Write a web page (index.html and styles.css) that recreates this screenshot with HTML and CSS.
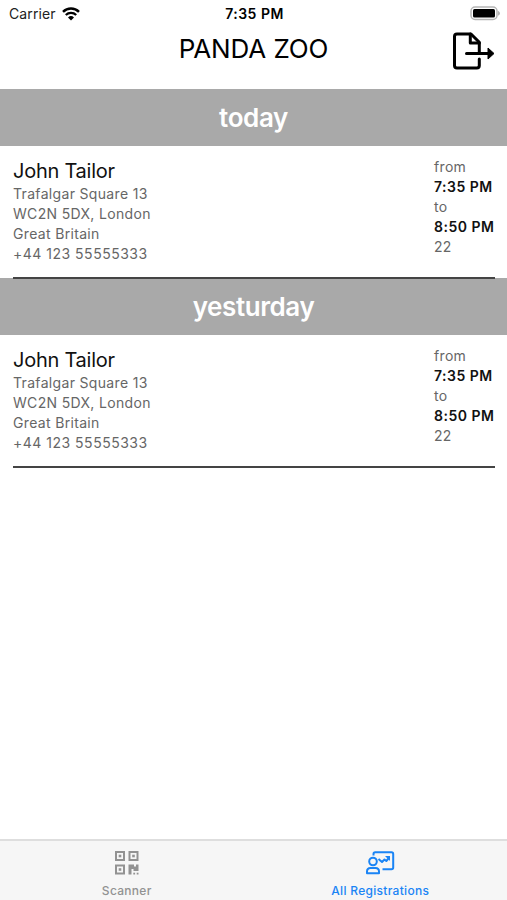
FILE: index.html
```
<!DOCTYPE html>
<html lang="en">
<head>
    <meta charset="UTF-8">
    <meta name="viewport" content="width=device-width, initial-scale=1.0">
    <title>Panda Zoo</title>
    <link rel="stylesheet" href="styles.css">
</head>
<body>
    <div class="app">
        <div class="status-bar">
            <div class="carrier">
                <span>Carrier</span>
                <svg class="wifi" width="18" height="14" viewBox="0 0 18 14">
                    <path d="M1 4.800a11.500 11.500 0 0 1 16 0" fill="none" stroke="#000" stroke-width="2.500"/>
                    <path d="M3.800 8a7.500 7.500 0 0 1 10.400 0" fill="none" stroke="#000" stroke-width="2.300"/>
                    <path d="M6 10.500a4.300 4.300 0 0 1 6 0L9 13.600z"/>
                </svg>
            </div>
            <div class="clock">7:35 PM</div>
            <svg class="battery" width="31" height="15" viewBox="0 0 31 15">
                <rect x="2" y="1" width="26" height="12.500" rx="4" fill="#fff" stroke="#b5b5b5" stroke-width="1.500"/>
                <rect x="4" y="3" width="22" height="8.500" rx="1.500"/>
                <path d="M29 4.800v5q2-1 2-2.500t-2-2.500z" fill="#b5b5b5"/>
            </svg>
        </div>

        <div class="header">
            <h1 class="title">PANDA ZOO</h1>
            <svg class="export" width="43" height="38" viewBox="0 0 43 38">
                <g fill="none" stroke="#000" stroke-width="3" stroke-linejoin="round" stroke-linecap="round">
                    <path d="M27.300 27V33.500q0 2.500-2.500 2.500H5q-2.500 0-2.500-2.500V4.500Q2.500 2 5 2H19l8.300 8.300V20"/>
                    <path d="M18.300 2v9h9"/>
                    <path d="M14.500 21.500H36"/>
                </g>
                <path d="M36 16v11l6-5.500z" stroke="#000" stroke-linejoin="round"/>
            </svg>
        </div>

        <div class="list">
            <h2 class="day">today</h2>
            <div class="entry">
                <div class="person">
                    <div class="name">John Tailor</div>
                    <div>Trafalgar Square 13</div>
                    <div>WC2N 5DX, London</div>
                    <div>Great Britain</div>
                    <div class="phone">+44 123 55555333</div>
                </div>
                <div class="times">
                    <div>from</div>
                    <div class="time">7:35 PM</div>
                    <div>to</div>
                    <div class="time">8:50 PM</div>
                    <div>22</div>
                </div>
            </div>

            <h2 class="day">yesturday</h2>
            <div class="entry">
                <div class="person">
                    <div class="name">John Tailor</div>
                    <div>Trafalgar Square 13</div>
                    <div>WC2N 5DX, London</div>
                    <div>Great Britain</div>
                    <div class="phone">+44 123 55555333</div>
                </div>
                <div class="times">
                    <div>from</div>
                    <div class="time">7:35 PM</div>
                    <div>to</div>
                    <div class="time">8:50 PM</div>
                    <div>22</div>
                </div>
            </div>
        </div>

        <div class="tab-bar">
            <div class="tab">
                <svg class="tab-icon" width="30" height="26" viewBox="0 0 30 26">
                    <g fill="none" stroke="#929292" stroke-width="2">
                        <rect x="4" y="2" width="8" height="8"/>
                        <rect x="17.500" y="2" width="8" height="8"/>
                        <rect x="4" y="15.500" width="8" height="8"/>
                    </g>
                    <g fill="#929292">
                        <rect x="6.700" y="4.700" width="2.600" height="2.600"/>
                        <rect x="20.200" y="4.700" width="2.600" height="2.600"/>
                        <rect x="6.700" y="18.200" width="2.600" height="2.600"/>
                        <path d="M16.500 14.500h5.500v2h2v-2h2.500v6.500h-5v-2h-2v5.500h-3z"/>
                        <rect x="21.300" y="22.700" width="1.800" height="1.800"/>
                        <rect x="24.700" y="22.700" width="1.800" height="1.800"/>
                    </g>
                </svg>
                <div class="tab-label">Scanner</div>
            </div>
            <div class="tab active">
                <svg class="tab-icon" width="30" height="26" viewBox="0 0 30 26">
                    <g fill="none" stroke="#1a84f5" stroke-width="2" stroke-linejoin="round">
                        <path d="M8.500 5.500V4q0-1.700 1.700-1.700H26.500q1.700 0 1.700 1.700V17.500q0 1.700-1.700 1.700H17.500"/>
                        <circle cx="8" cy="11.500" r="3.800"/>
                        <path d="M2 23.200v-1.700q0-3.500 3.500-3.500h5q3.500 0 3.500 3.500v1.700z"/>
                        <path d="M13.500 9l3.500 3 2.500-2.500 1.800 1.500 3-3.500"/>
                    </g>
                    <path d="M20 6h5v5z" fill="#1a84f5"/>
                </svg>
                <div class="tab-label">All Registrations</div>
            </div>
        </div>
    </div>
</body>
</html>
```
FILE: styles.css
```
body {
    font-family: Inter, "Liberation Sans", sans-serif;
    margin: 0;
    background-color: #fff;
    color: #000;
}

.app {
    display: flex;
    flex-direction: column;
    height: 900px;
}

.status-bar {
    display: grid;
    grid-template-columns: 1fr auto 1fr;
    align-items: center;
    height: 27px;
    padding: 0 7px 0 9px;
    font-size: 14px;
}

.carrier {
    display: flex;
    align-items: center;
    gap: 6px;
    color: #222;
    letter-spacing: 0.1px;
}

.clock {
    font-weight: 600;
    font-size: 14px;
    letter-spacing: 0.5px;
}

.battery {
    justify-self: end;
}

.header {
    display: grid;
    grid-template-columns: 1fr auto 1fr;
    height: 62px;
    padding: 0 12px;
}

.title {
    grid-column: 2;
    margin: 5px 0 0;
    font-size: 26px;
    font-weight: 400;
    letter-spacing: -0.1px;
    line-height: 34px;
}

.export {
    justify-self: end;
    margin-top: 5px;
}

.list {
    flex: 1;
}

.day {
    height: 57px;
    margin: 0;
    background-color: #a9a9a9;
    color: #fff;
    font-size: 26px;
    font-weight: 600;
    letter-spacing: -0.4px;
    line-height: 58px;
    text-align: center;
}

/* the bottom line overlaps the next day bar by 1px */
.entry {
    position: relative;
    display: flex;
    justify-content: space-between;
    box-sizing: border-box;
    height: 133px;
    margin: 0 12px -1px 13px;
    padding-top: 11px;
    border-bottom: 2px solid #444;
    color: #666;
    font-size: 14px;
    letter-spacing: 0.33px;
    line-height: 20px;
}

.name {
    padding-top: 2px;
    color: #111;
    font-size: 20px;
    letter-spacing: -0.25px;
    line-height: 25px;
}

.phone {
    letter-spacing: 0.5px;
}

.times {
    width: 61px;
    white-space: nowrap;
}

.time {
    color: #111;
    font-weight: 600;
    letter-spacing: 0.5px;
}

.tab-bar {
    display: flex;
    box-sizing: border-box;
    height: 61px;
    border-top: 2px solid #dedede;
    background-color: #f6f6f6;
}

.tab {
    flex: 1;
    padding-top: 9px;
    color: #929292;
    font-size: 12px;
    text-align: center;
}

.tab-icon {
    display: block;
    margin: 0 auto;
}

.tab-label {
    margin-top: 7px;
    font-weight: 500;
    letter-spacing: 0.3px;
    line-height: 16px;
}

.active {
    color: #1a84f5;
}
```
